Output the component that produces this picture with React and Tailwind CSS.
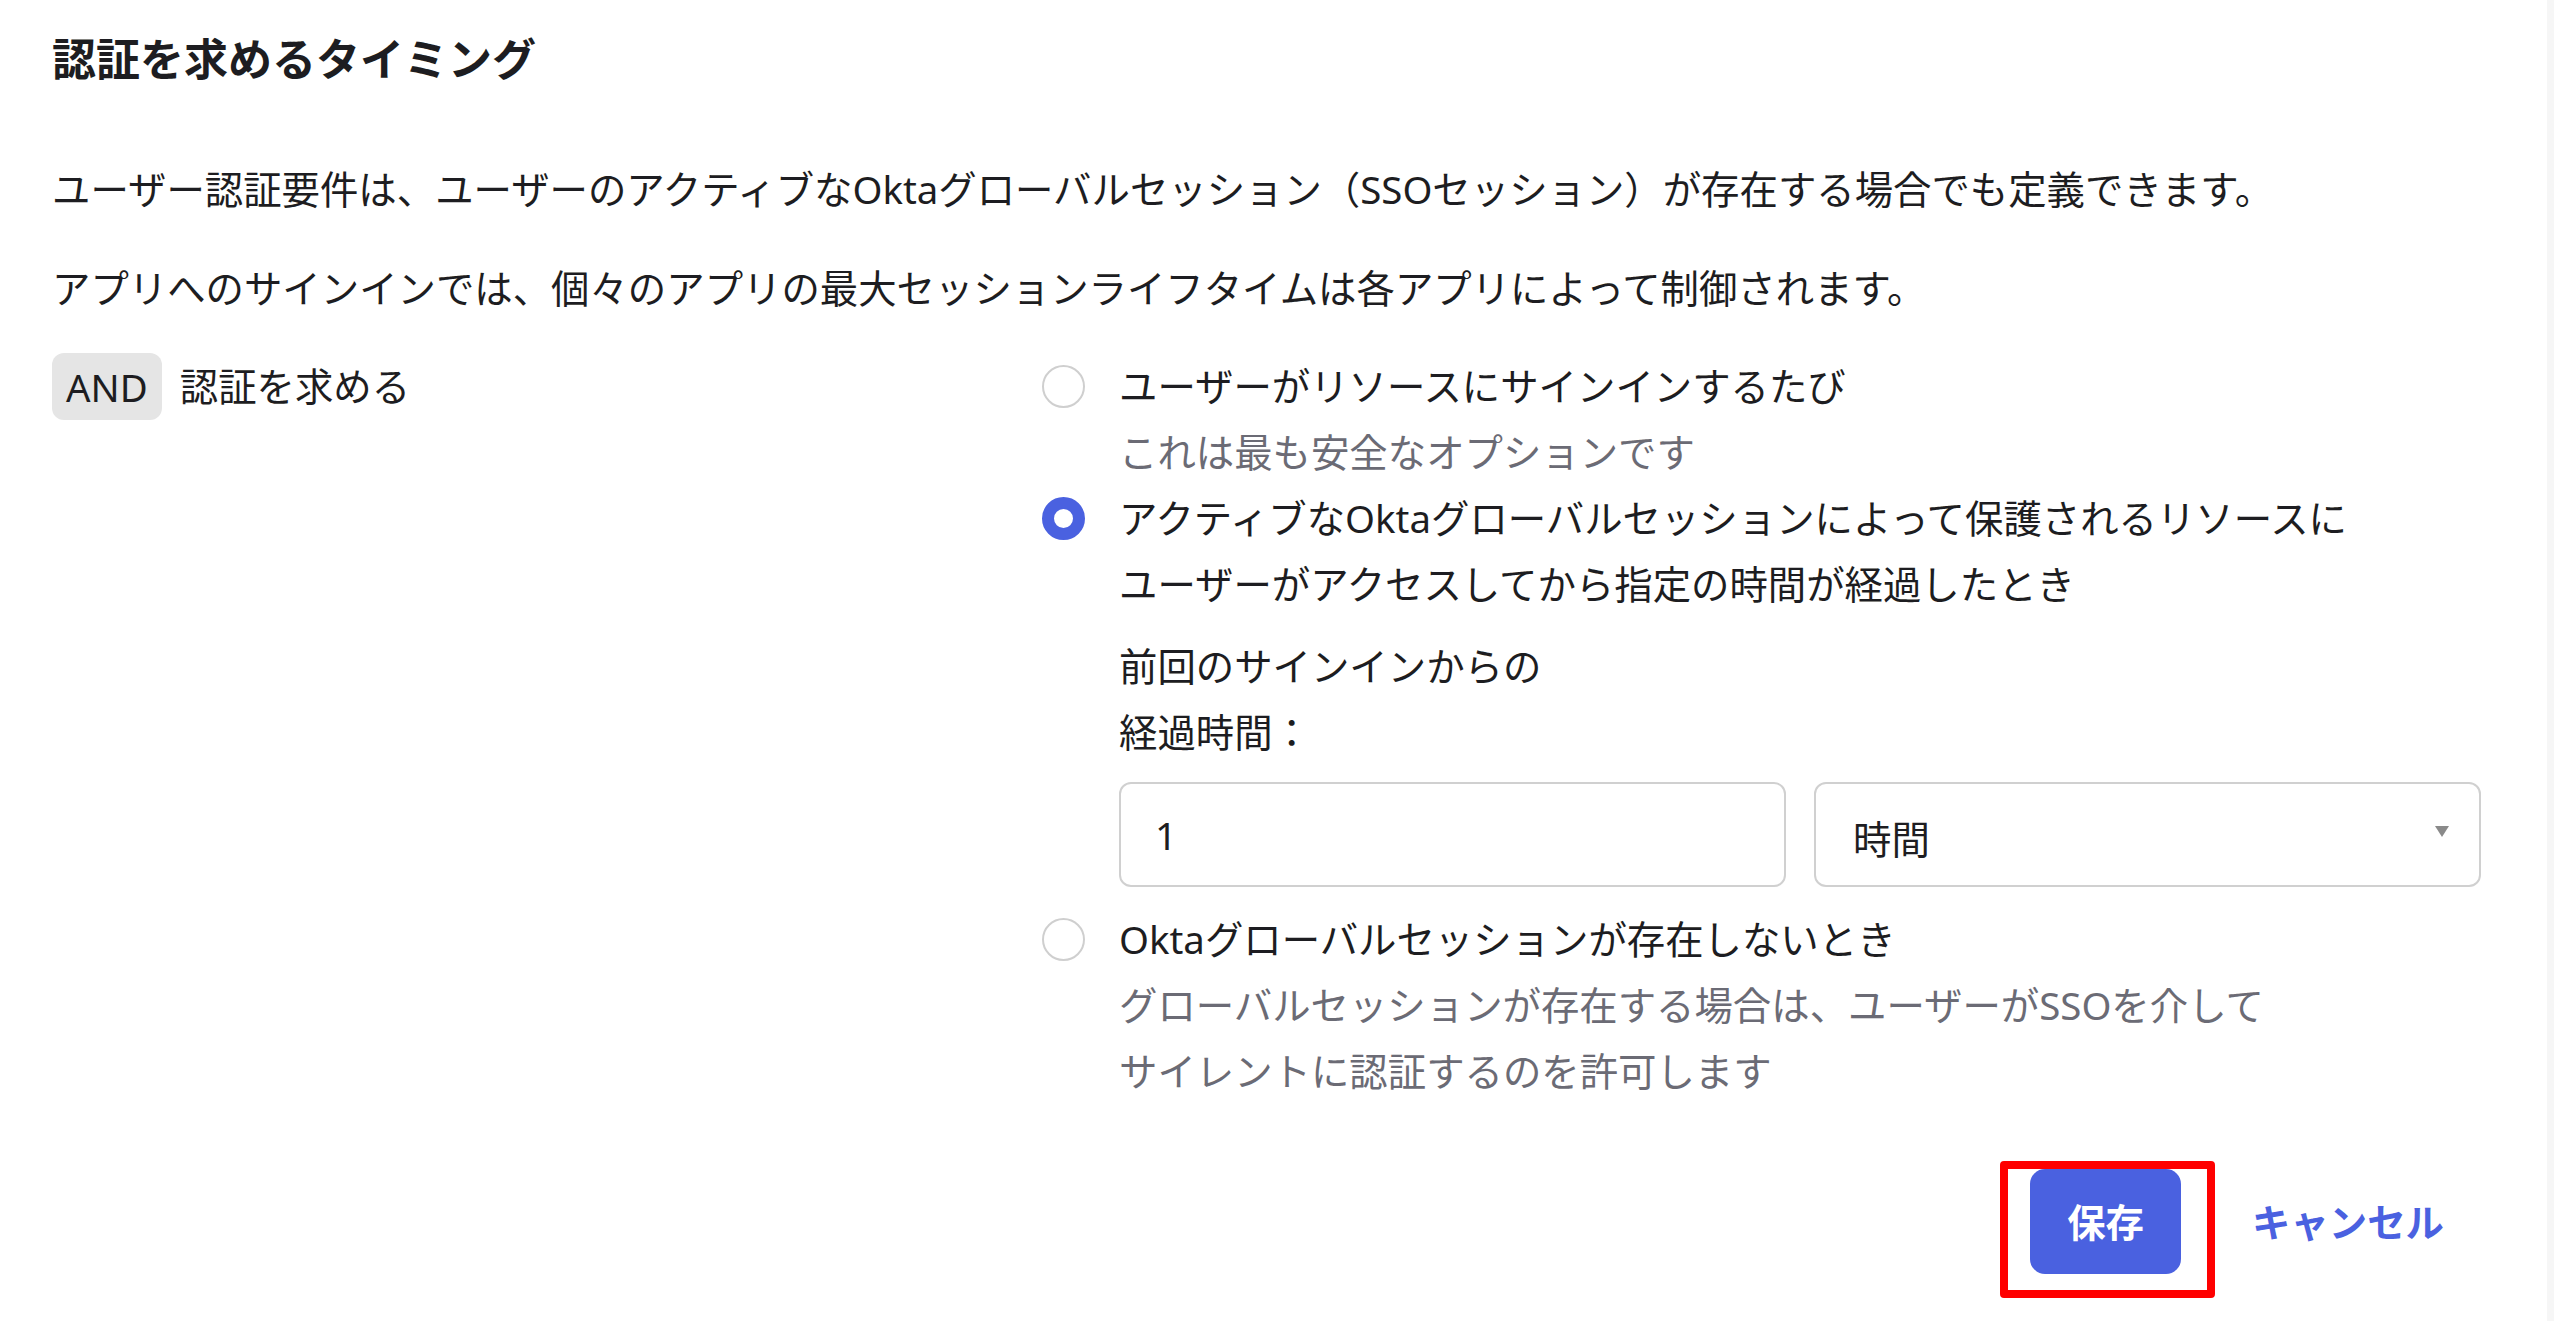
import { useState } from "react";

function Radio({ checked }) {
    return checked ? (
        <span className="mt-[12px] block h-[43px] w-[43px] shrink-0 rounded-full border-[12px] border-[#4a61e0] bg-white" />
    ) : (
        <span className="mt-[12px] block h-[43px] w-[43px] shrink-0 rounded-full border-2 border-[#cfcfcf] bg-white" />
    );
}

export default function App() {

    const [choice, setChoice] = useState("elapsed");
    const [amount, setAmount] = useState("1");

    return (
        <div className="flex min-h-screen w-full bg-white font-['Noto_Sans','Noto_Sans_CJK_JP',sans-serif] text-[38.4px] leading-[66px] text-[#1d1d21]">

            <div className="flex-1 pl-[52px] pr-[66px] pt-[26px]">

                <h2 className="text-[44px] font-bold leading-[66px]">
                    認証を求めるタイミング
                </h2>

                <p className="mt-[64px]">
                    ユーザー認証要件は、ユーザーのアクティブなOktaグローバルセッション（SSOセッション）が存在する場合でも定義できます。
                </p>

                <p className="mt-[33px]">
                    アプリへのサインインでは、個々のアプリの最大セッションライフタイムは各アプリによって制御されます。
                </p>

                <div className="mt-[32px] flex">

                    <div className="flex w-[990px] shrink-0 items-start">
                        <span className="flex h-[67px] items-center rounded-[12px] bg-[#e5e5e5] px-[14px]">
                            AND
                        </span>
                        <span className="ml-[18px]">認証を求める</span>
                    </div>

                    <div className="flex-1">

                        <div className="flex cursor-pointer gap-[34px]" onClick={() => setChoice("every")}>
                            <Radio checked={choice === "every"} />
                            <div>
                                <div>ユーザーがリソースにサインインするたび</div>
                                <div className="text-[#6b6b75]">これは最も安全なオプションです</div>
                            </div>
                        </div>

                        <div className="flex gap-[34px]">
                            <div className="cursor-pointer" onClick={() => setChoice("elapsed")}>
                                <Radio checked={choice === "elapsed"} />
                            </div>
                            <div className="flex-1">
                                <div>アクティブなOktaグローバルセッションによって保護されるリソースに</div>
                                <div>ユーザーがアクセスしてから指定の時間が経過したとき</div>

                                <div className="mt-[16px]">前回のサインインからの</div>
                                <div>経過時間：</div>

                                <div className="mt-[17px] grid grid-cols-2 gap-[28px]">
                                    <input
                                        type="text"
                                        value={amount}
                                        onChange={(e) => setAmount(e.target.value)}
                                        className="h-[105px] w-full rounded-[12px] border-2 border-[#d0d0d0] bg-white pl-[34px] text-[38.4px] outline-none"
                                    />
                                    <div className="flex h-[105px] items-center justify-between rounded-[12px] border-2 border-[#d0d0d0] bg-white pl-[37px] pr-[30px]">
                                        <span className="translate-y-[4px]">時間</span>
                                        <svg width="14" height="11" viewBox="0 0 14 11" className="-translate-y-[3px]">
                                            <polygon points="0,0 14,0 7,11" fill="#8a8a8a" />
                                        </svg>
                                    </div>
                                </div>
                            </div>
                        </div>

                        <div className="mt-[19px] flex cursor-pointer gap-[34px]" onClick={() => setChoice("none")}>
                            <Radio checked={choice === "none"} />
                            <div>
                                <div>Oktaグローバルセッションが存在しないとき</div>
                                <div className="text-[#6b6b75]">グローバルセッションが存在する場合は、ユーザーがSSOを介して</div>
                                <div className="text-[#6b6b75]">サイレントに認証するのを許可します</div>
                            </div>
                        </div>

                    </div>

                </div>

                <div className="mt-[57px] flex items-start justify-end">

                    <div className="rounded-[4px] border-[8px] border-[#ff0000] pb-[16px] pl-[22px] pr-[26px]">
                        <button
                            type="button"
                            className="h-[105px] w-[151px] rounded-[15px] bg-[#4a61e0] text-[38.4px] font-bold text-white"
                        >
                            保存
                        </button>
                    </div>

                    <button
                        type="button"
                        className="mt-[8px] flex h-[105px] items-center px-[37px] text-[38.4px] font-bold text-[#4a61e0]"
                    >
                        キャンセル
                    </button>

                </div>

            </div>

            <div className="w-[7px] shrink-0 bg-[#f6f6f6]" />

        </div>
    );

}
